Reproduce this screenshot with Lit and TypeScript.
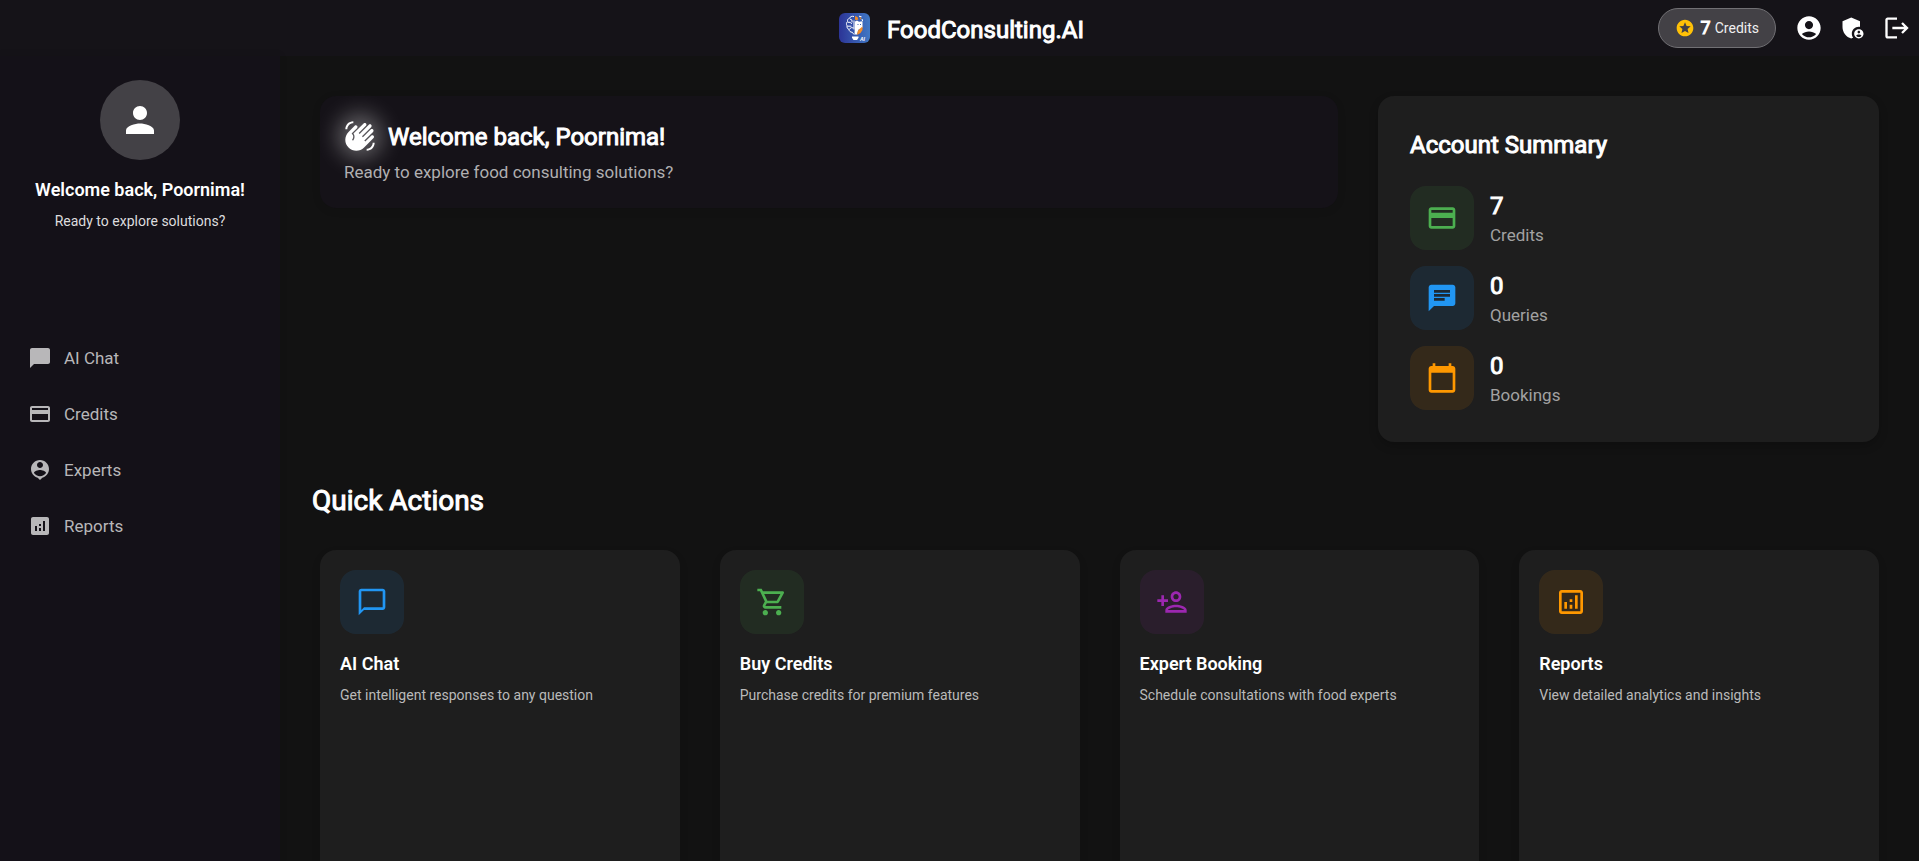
import { LitElement, html, svg, css } from "lit";
import { customElement, property } from "lit/decorators.js";

const ICONS: Record<string, string> = {
  person:
    "M12 12c2.21 0 4-1.79 4-4s-1.79-4-4-4-4 1.79-4 4 1.79 4 4 4zm0 2c-2.67 0-8 1.34-8 4v2h16v-2c0-2.66-5.33-4-8-4z",
  stars:
    "M11.99 2C6.47 2 2 6.48 2 12s4.47 10 9.99 10C17.52 22 22 17.52 22 12S17.52 2 11.99 2zm4.24 16L12 15.45 7.77 18l1.12-4.81-3.73-3.23 4.92-.42L12 5l1.92 4.53 4.92.42-3.73 3.23L16.23 18z",
  account:
    "M12 2C6.48 2 2 6.48 2 12s4.48 10 10 10 10-4.48 10-10S17.52 2 12 2zm0 4c1.93 0 3.5 1.57 3.5 3.5S13.93 13 12 13s-3.5-1.57-3.5-3.5S10.07 6 12 6zm0 14c-2.03 0-4.43-.82-6.14-2.88C7.55 15.8 9.68 15 12 15s4.45.8 6.14 2.12C16.43 19.18 14.03 20 12 20z",
  admin:
    "M17 11c.34 0 .67.04 1 .09V6.27L10.5 3 3 6.27v4.91c0 4.54 3.2 8.79 7.5 9.82.55-.13 1.08-.32 1.6-.55-.69-.98-1.1-2.17-1.1-3.45 0-3.31 2.69-6 6-6zM17 13c-2.21 0-4 1.79-4 4s1.79 4 4 4 4-1.79 4-4-1.79-4-4-4zm0 1.38c.62 0 1.12.51 1.12 1.12s-.51 1.12-1.12 1.12-1.12-.51-1.12-1.12.5-1.12 1.12-1.12zm0 5.37c-.93 0-1.74-.46-2.24-1.17.05-.72 1.51-1.08 2.24-1.08s2.19.36 2.24 1.08c-.5.71-1.31 1.17-2.24 1.17z",
  logout:
    "M17 7l-1.41 1.41L18.17 11H8v2h10.17l-2.58 2.58L17 17l5-5zM4 5h8V3H4c-1.1 0-2 .9-2 2v14c0 1.1.9 2 2 2h8v-2H4V5z",
  chatBubble: "M20 2H4c-1.1 0-2 .9-2 2v18l4-4h14c1.1 0 2-.9 2-2V4c0-1.1-.9-2-2-2z",
  chatOutline:
    "M20 2H4c-1.1 0-2 .9-2 2v18l4-4h14c1.1 0 2-.9 2-2V4c0-1.1-.9-2-2-2zm0 14H6l-2 2V4h16v12z",
  chatLines:
    "M20 2H4c-1.1 0-1.99.9-1.99 2L2 22l4-4h14c1.1 0 2-.9 2-2V4c0-1.1-.9-2-2-2zM6 9h12v2H6V9zm8 5H6v-2h8v2zm4-6H6V6h12v2z",
  card: "M20 4H4c-1.11 0-1.99.89-1.99 2L2 18c0 1.11.89 2 2 2h16c1.11 0 2-.89 2-2V6c0-1.11-.89-2-2-2zm0 14H4v-6h16v6zm0-10H4V6h16v2z",
  personPin:
    "M12 2c-4.97 0-9 4.03-9 9 0 4.17 2.84 7.67 6.69 8.69L12 22l2.31-2.31C18.16 18.67 21 15.17 21 11c0-4.97-4.03-9-9-9zm0 2c1.66 0 3 1.34 3 3s-1.34 3-3 3-3-1.34-3-3 1.34-3 3-3zm0 14.3c-2.5 0-4.71-1.28-6-3.22.03-1.99 4-3.08 6-3.08 1.99 0 5.97 1.09 6 3.08-1.29 1.94-3.5 3.22-6 3.22z",
  analytics:
    "M19 3H5c-1.1 0-2 .9-2 2v14c0 1.1.9 2 2 2h14c1.1 0 2-.9 2-2V5c0-1.1-.9-2-2-2zM9 17H7v-5h2v5zm4 0h-2v-3h2v3zm0-5h-2v-2h2v2zm4 5h-2V7h2v10z",
  analyticsOutline:
    "M19 3H5c-1.1 0-2 .9-2 2v14c0 1.1.9 2 2 2h14c1.1 0 2-.9 2-2V5c0-1.1-.9-2-2-2zm0 16H5V5h14v14zM7 12h2v5H7zM15 7h2v10h-2zM11 14h2v3h-2zM11 10h2v2h-2z",
  calendar:
    "M20 3h-1V1h-2v2H7V1H5v2H4c-1.1 0-2 .9-2 2v16c0 1.1.9 2 2 2h16c1.1 0 2-.9 2-2V5c0-1.1-.9-2-2-2zm0 18H4V8h16v13z",
  cart: "M15.55 13c.75 0 1.41-.41 1.75-1.03l3.58-6.49c.37-.66-.11-1.48-.87-1.48H5.21l-.94-2H1v2h2l3.6 7.59-1.35 2.44C4.52 15.37 5.48 17 7 17h12v-2H7l1.1-2h7.45zM6.16 6h12.15l-2.76 5H8.53L6.16 6zM7 18c-1.1 0-1.99.9-1.99 2S5.9 22 7 22s2-.9 2-2-.9-2-2-2zm10 0c-1.1 0-1.99.9-1.99 2s.89 2 1.99 2 2-.9 2-2-.9-2-2-2z",
  personAdd:
    "M15 12c2.21 0 4-1.79 4-4s-1.79-4-4-4-4 1.79-4 4 1.79 4 4 4zm0-6c1.1 0 2 .9 2 2s-.9 2-2 2-2-.9-2-2 .9-2 2-2zm0 8c-2.67 0-8 1.34-8 4v2h16v-2c0-2.66-5.33-4-8-4zm-6 4c.22-.72 3.31-2 6-2 2.7 0 5.8 1.29 6 2H9zm-3-3v-3h3v-2H6V7H4v3H1v2h3v3h2z",
  wave: "M23 17c0 3.31-2.69 6-6 6v-1.5c2.48 0 4.5-2.02 4.5-4.5H23zM1 7c0-3.31 2.69-6 6-6v1.5C4.52 2.5 2.5 4.52 2.5 7H1zM8.01 4.32l-4.6 4.6c-3.22 3.22-3.22 8.45 0 11.67s8.45 3.22 11.67 0l7.07-7.07c.49-.49.49-1.28 0-1.77-.49-.49-1.28-.49-1.77 0l-4.42 4.42-.71-.71 6.54-6.54c.49-.49.49-1.28 0-1.77s-1.28-.49-1.77 0l-5.83 5.83-.71-.71 6.89-6.89c.49-.49.49-1.28 0-1.77s-1.28-.49-1.77 0l-6.89 6.89-.71-.68 5.48-5.48c.49-.49.49-1.28 0-1.77s-1.28-.49-1.77 0l-7.62 7.62c1.22 1.57 1.11 3.84-.33 5.28l-.71-.71c1.17-1.17 1.17-3.07 0-4.24l-.35-.35 4.07-4.07c.49-.49.49-1.28 0-1.77-.48-.5-1.27-.5-1.76-.01z",
};

@customElement("app-icon")
export class AppIcon extends LitElement {
  static styles = css`
    :host {
      display: block;
      flex: none;
      width: 24px;
      height: 24px;
    }
    .glyph {
      display: block;
      width: 100%;
      height: 100%;
      fill: currentColor;
    }
  `;

  @property() name = "";

  render() {
    return html`<svg class="glyph" viewBox="0 0 24 24" aria-hidden="true">
      ${svg`<path d=${ICONS[this.name] ?? ""}></path>`}
    </svg>`;
  }
}

@customElement("app-logo")
export class AppLogo extends LitElement {
  static styles = css`
    :host {
      display: block;
      flex: none;
      width: 32px;
      height: 32px;
    }
    .mark {
      display: block;
      width: 100%;
      height: 100%;
    }
    .tag {
      font: italic bold 5px "Liberation Sans", sans-serif;
      fill: #fff;
    }
  `;

  render() {
    return html`<svg class="mark" viewBox="0 0 32 32" aria-hidden="true">
      <defs>
        <linearGradient id="bg" x1="0" y1="0" x2="1" y2="0">
          <stop offset="0" stop-color="#2c3496"></stop>
          <stop offset="1" stop-color="#4078c4"></stop>
        </linearGradient>
      </defs>
      <rect x="0" y="1" width="31" height="30" rx="6" fill="url(#bg)"></rect>
      <g fill="none" stroke="#fff" stroke-width="1" stroke-linejoin="round">
        <path d="M15 4.500c-2-.6-4 .2-4.400 1.700-1.600.4-2.400 1.800-2 3.200-1.300 1-1.500 3-.5 4.400-.4 1.600.3 3 1.800 3.600.3 1.800 1.700 3 3.300 2.800l1.800 2.300"></path>
        <path d="M11 7l2 1.200v2.300M8.600 10.300h2.600l1.600 1.700M8.400 14.200h4M10.200 17.400l2-1.800 2.500.4M15 8.500v9"></path>
      </g>
      <path d="M16 9.500l2-1 2 1.200 3.500-.5v6.300l-1.800 1.500-2.200.5-1.500 5H15.500z" fill="#fff"></path>
      <path
        d="M16 4l2.500 1 .8 2.500L17 8.200l-1-.6zM20.500 4.500l2 2-1.200 1zM23.500 14.500v3.500l-2 3-3.500 2 .8-4 2.200-2.500z"
        fill="#f28c28"
      ></path>
      <path d="M20 4.200l2.600.6M23 7l.6 2" fill="none" stroke="#fff"></path>
      <path d="M18.500 12.500h1M21 12.500h1" fill="none" stroke="#3a62b4"></path>
      <path d="M13 24.500h6.500v1.200l-1.500 2.300h-3.500L13 25.700z" fill="#fff"></path>
      <text class="tag" x="21" y="29">AI</text>
    </svg>`;
  }
}

const NAV = [
  { icon: "chatBubble", label: "AI Chat" },
  { icon: "card", label: "Credits" },
  { icon: "personPin", label: "Experts" },
  { icon: "analytics", label: "Reports" },
];

const SUMMARY = [
  { icon: "card", tone: "green", value: 7, label: "Credits" },
  { icon: "chatLines", tone: "blue", value: 0, label: "Queries" },
  { icon: "calendar", tone: "orange", value: 0, label: "Bookings" },
];

const ACTIONS = [
  { icon: "chatOutline", tone: "blue", title: "AI Chat", text: "Get intelligent responses to any question" },
  { icon: "cart", tone: "green", title: "Buy Credits", text: "Purchase credits for premium features" },
  { icon: "personAdd", tone: "purple", title: "Expert Booking", text: "Schedule consultations with food experts" },
  { icon: "analyticsOutline", tone: "orange", title: "Reports", text: "View detailed analytics and insights" },
];

@customElement("app-root")
export class AppRoot extends LitElement {
  static styles = css`
    :host {
      display: flex;
      flex-direction: column;
      height: 100vh;
      overflow: hidden;
      background: #121212;
      color: #fff;
      font-family: Roboto, sans-serif;
      font-size: 17px;
      line-height: 24px;
    }
    * {
      box-sizing: border-box;
    }
    h1,
    h2,
    h3,
    p,
    ul {
      margin: 0;
      padding: 0;
      list-style: none;
    }
    a {
      color: inherit;
      text-decoration: none;
    }
    .strong {
      font-weight: 400;
      -webkit-text-stroke: 1px currentColor;
    }

    .topbar {
      flex: none;
      display: grid;
      grid-template-columns: 1fr auto 1fr;
      align-items: center;
      height: 56px;
      background: #151318;
    }
    .brand {
      grid-column: 2;
      display: flex;
      align-items: center;
      gap: 16px;
      padding-left: 4px;
    }
    .brand-name {
      padding-top: 4px;
      font-size: 24px;
      line-height: 34px;
    }
    .tools {
      display: flex;
      justify-content: flex-end;
      align-items: center;
    }
    .credits {
      display: flex;
      align-items: center;
      height: 40px;
      margin: 0 11px 0 0;
      padding: 0 16px;
      border: 1px solid #717074;
      border-radius: 20px;
      background: #434146;
      color: #fff;
      font: inherit;
      cursor: pointer;
    }
    .credits-icon {
      width: 20px;
      height: 20px;
      margin-right: 6px;
      color: #ffc107;
    }
    .credits-count {
      margin-right: 4px;
      font-size: 18px;
    }
    .credits-label {
      font-size: 14px;
      color: #f0f0f0;
    }
    .tool {
      display: flex;
      padding: 8px;
      border: 0;
      background: none;
      color: #fff;
      cursor: pointer;
    }
    .tool-icon {
      width: 28px;
      height: 28px;
    }

    .body {
      flex: 1;
      display: flex;
      min-height: 0;
    }
    .sidebar {
      flex: none;
      width: 280px;
      background: #141118;
      box-shadow: 0 0 8px rgba(0, 0, 0, 0.1);
    }
    .profile {
      display: flex;
      flex-direction: column;
      align-items: center;
      padding: 24px;
      text-align: center;
    }
    .avatar {
      display: flex;
      align-items: center;
      justify-content: center;
      width: 80px;
      height: 80px;
      margin-bottom: 16px;
      border-radius: 50%;
      background: #434146;
    }
    .avatar-icon {
      width: 42px;
      height: 42px;
    }
    .profile-name {
      font-size: 18px;
      font-weight: 600;
      line-height: 28px;
    }
    .profile-text {
      margin-top: 7px;
      font-size: 14px;
      line-height: 20px;
      color: #dddcde;
    }
    .nav {
      padding: 75px 12px 0;
    }
    .nav-link {
      display: flex;
      align-items: center;
      gap: 12px;
      height: 56px;
      padding: 0 16px;
      color: #b8b7b9;
    }

    .content {
      flex: 1;
      min-width: 0;
      padding: 32px;
      overflow-y: auto;
      scrollbar-width: none;
    }
    .overview {
      display: grid;
      grid-template-columns: 2fr 1fr;
      align-items: start;
      gap: 24px;
    }
    .welcome {
      margin: 8px;
      padding: 24px;
      border-radius: 16px;
      background: #151218;
      box-shadow: 0 2px 8px rgba(0, 0, 0, 0.1);
    }
    .welcome-head {
      display: flex;
      align-items: flex-start;
      gap: 12px;
    }
    .wave {
      position: relative;
      isolation: isolate;
      width: 32px;
      height: 32px;
    }
    .wave::before {
      content: "";
      position: absolute;
      inset: -6px;
      z-index: -1;
      border-radius: 50%;
      background: rgba(255, 255, 255, 0.34);
      filter: blur(11px);
    }
    .heading {
      font-size: 24px;
      line-height: 34px;
    }
    .welcome-text {
      margin-top: 6px;
      color: #b0afb1;
    }
    .summary {
      margin: 8px;
      padding: 32px;
      border-radius: 16px;
      background: #1e1e1e;
      box-shadow: 0 4px 10px rgba(0, 0, 0, 0.2);
    }
    .stats {
      display: grid;
      gap: 16px;
      margin-top: 24px;
    }
    .stat {
      display: flex;
      align-items: center;
      gap: 16px;
    }
    .stat-label {
      color: #a2a2a2;
    }
    .tile {
      flex: none;
      display: flex;
      align-items: center;
      justify-content: center;
      width: 64px;
      height: 64px;
      border-radius: 16px;
    }
    .tile-icon {
      width: 32px;
      height: 32px;
    }
    .green {
      color: #4caf50;
      background: rgba(76, 175, 80, 0.1);
    }
    .blue {
      color: #2196f3;
      background: rgba(33, 150, 243, 0.1);
    }
    .orange {
      color: #ff9800;
      background: rgba(255, 152, 0, 0.1);
    }
    .purple {
      color: #9c27b0;
      background: rgba(156, 39, 176, 0.1);
    }

    .section-title {
      margin: 32px 0 22px;
      font-size: 28px;
      line-height: 38px;
    }
    .actions {
      display: grid;
      grid-template-columns: repeat(4, 1fr);
      gap: 40px;
      padding: 8px;
    }
    .action {
      display: block;
      aspect-ratio: 1;
      padding: 20px;
      border-radius: 16px;
      background: #1e1e1e;
      box-shadow: 0 4px 10px rgba(0, 0, 0, 0.1);
    }
    .action-title {
      margin-top: 16px;
      font-size: 18px;
      font-weight: 600;
      line-height: 28px;
    }
    .action-text {
      margin-top: 7px;
      font-size: 14px;
      line-height: 20px;
      color: #bababa;
    }
  `;

  render() {
    return html`
      <header class="topbar">
        <div class="brand">
          <app-logo></app-logo>
          <h1 class="brand-name strong">FoodConsulting.AI</h1>
        </div>
        <div class="tools">
          <button class="credits" type="button">
            <app-icon class="credits-icon" name="stars"></app-icon>
            <span class="credits-count strong">7</span>
            <span class="credits-label">Credits</span>
          </button>
          <button class="tool" type="button" aria-label="Profile">
            <app-icon class="tool-icon" name="account"></app-icon>
          </button>
          <button class="tool" type="button" aria-label="Admin">
            <app-icon class="tool-icon" name="admin"></app-icon>
          </button>
          <button class="tool" type="button" aria-label="Log out">
            <app-icon class="tool-icon" name="logout"></app-icon>
          </button>
        </div>
      </header>
      <div class="body">
        <aside class="sidebar">
          <div class="profile">
            <div class="avatar"><app-icon class="avatar-icon" name="person"></app-icon></div>
            <p class="profile-name">Welcome back, Poornima!</p>
            <p class="profile-text">Ready to explore solutions?</p>
          </div>
          <nav class="nav" aria-label="Main">
            ${NAV.map(
              (item) => html`<a class="nav-link" href="#">
                <app-icon name=${item.icon}></app-icon><span>${item.label}</span>
              </a>`
            )}
          </nav>
        </aside>
        <main class="content">
          <div class="overview">
            <section class="welcome">
              <div class="welcome-head">
                <app-icon class="wave" name="wave"></app-icon>
                <h2 class="heading strong">Welcome back, Poornima!</h2>
              </div>
              <p class="welcome-text">Ready to explore food consulting solutions?</p>
            </section>
            <section class="summary">
              <h2 class="heading strong">Account Summary</h2>
              <ul class="stats">
                ${SUMMARY.map(
                  (s) => html`<li class="stat">
                    <div class="tile ${s.tone}"><app-icon class="tile-icon" name=${s.icon}></app-icon></div>
                    <div>
                      <p class="heading strong">${s.value}</p>
                      <p class="stat-label">${s.label}</p>
                    </div>
                  </li>`
                )}
              </ul>
            </section>
          </div>
          <h2 class="section-title strong">Quick Actions</h2>
          <div class="actions">
            ${ACTIONS.map(
              (a) => html`<a class="action" href="#">
                <div class="tile ${a.tone}"><app-icon class="tile-icon" name=${a.icon}></app-icon></div>
                <h3 class="action-title">${a.title}</h3>
                <p class="action-text">${a.text}</p>
              </a>`
            )}
          </div>
        </main>
      </div>
    `;
  }
}
